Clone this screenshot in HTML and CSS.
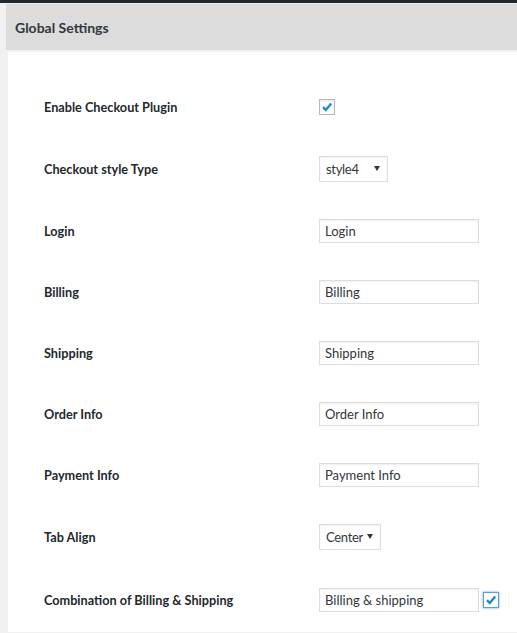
FILE: index.html
```html
<!DOCTYPE html>
<html>
<head>
<meta charset="utf-8">
<link rel="stylesheet" href="styles.css">
</head>
<body>
<div class="topbar"></div>
<div class="wrap">
  <div class="header"><h2>Global Settings</h2></div>
  <div class="panel">
    <div class="row h61">
      <div class="label">Enable Checkout Plugin</div>
      <div class="control"><span class="check"><svg viewBox="0 0 14 14" width="14" height="14"><path d="M3 7.2 L5.8 10 L11.2 3.6" fill="none" stroke="#1e8cbe" stroke-width="2.4"/></svg></span></div>
    </div>
    <div class="row h63">
      <div class="label">Checkout style Type</div>
      <div class="control"><div class="select w69"><span>style4</span><i class="arrow"></i></div></div>
    </div>
    <div class="row h61">
      <div class="label">Login</div>
      <div class="control"><input class="text" type="text" value="Login"></div>
    </div>
    <div class="row h61">
      <div class="label">Billing</div>
      <div class="control"><input class="text" type="text" value="Billing"></div>
    </div>
    <div class="row h61">
      <div class="label">Shipping</div>
      <div class="control"><input class="text" type="text" value="Shipping"></div>
    </div>
    <div class="row h61">
      <div class="label">Order Info</div>
      <div class="control"><input class="text" type="text" value="Order Info"></div>
    </div>
    <div class="row h61">
      <div class="label">Payment Info</div>
      <div class="control"><input class="text" type="text" value="Payment Info"></div>
    </div>
    <div class="row h63">
      <div class="label">Tab Align</div>
      <div class="control"><div class="select w62"><span>Center</span><i class="arrow"></i></div></div>
    </div>
    <div class="row h63">
      <div class="label">Combination of Billing &amp; Shipping</div>
      <div class="control"><input class="text" type="text" value="Billing &amp; shipping"><span class="check focus"><svg viewBox="0 0 14 14" width="14" height="14"><path d="M3 7.2 L5.8 10 L11.2 3.6" fill="none" stroke="#1e8cbe" stroke-width="2.4"/></svg></span></div>
    </div>
  </div>
</div>
</body>
</html>
```
FILE: styles.css
```css
html, body {
  margin: 0;
  padding: 0;
  background: #f1f1f1;
  font-family: Lato, "Open Sans", sans-serif;
  color: #23282d;
  overflow: hidden;
}
.topbar {
  height: 3px;
  background: #23282d;
  border-bottom: 1px solid #f1f1f1;
}
.wrap {
  padding-left: 6px;
}
.header {
  background: #dcdcdc;
  height: 46px;
  display: flex;
  align-items: center;
  padding-left: 9px;
}
.header h2 {
  margin: 0;
  font-size: 14px;
  font-weight: 700;
  color: #32373c;
}
.panel {
  margin-top: 2px;
  margin-left: 2px;
  background: #fff;
  padding-top: 24px;
  padding-bottom: 1px;
}
.row {
  display: flex;
  align-items: center;
  padding-left: 36px;
}
.h61 { height: 61px; }
.h63 { height: 63px; }
.label {
  width: 275px;
  font-size: 12.7px;
  font-weight: 700;
  color: #23282d;
}
.control {
  display: flex;
  align-items: center;
  gap: 4px;
}
.check {
  width: 14px;
  height: 14px;
  border: 1px solid #b4b9be;
  background: #fff;
  box-shadow: inset 0 1px 2px rgba(0,0,0,0.1);
  display: flex;
  align-items: center;
  justify-content: center;
}
.check.focus {
  border-color: #5b9dd9;
  box-shadow: 0 0 2px rgba(30,140,190,0.8);
}
.select {
  border: 1px solid #ddd;
  background: #fff;
  box-sizing: border-box;
  height: 26px;
  display: flex;
  align-items: center;
  justify-content: space-between;
  padding: 0 7px 0 6px;
  font-size: 13px;
  letter-spacing: -0.3px;
  color: #32373c;
  box-shadow: inset 0 1px 2px rgba(0,0,0,0.07);
}
.w69 { width: 69px; }
.w62 { width: 62px; }
.arrow {
  width: 0;
  height: 0;
  border-left: 3px solid transparent;
  border-right: 3px solid transparent;
  border-top: 5px solid #32373c;
}
.text {
  width: 160px;
  height: 24px;
  box-sizing: border-box;
  border: 1px solid #ddd;
  box-shadow: inset 0 1px 2px rgba(0,0,0,0.07);
  padding: 0 5px;
  margin: 0;
  font-family: Lato, "Open Sans", sans-serif;
  font-size: 13px;
  color: #32373c;
  outline: none;
}
```
